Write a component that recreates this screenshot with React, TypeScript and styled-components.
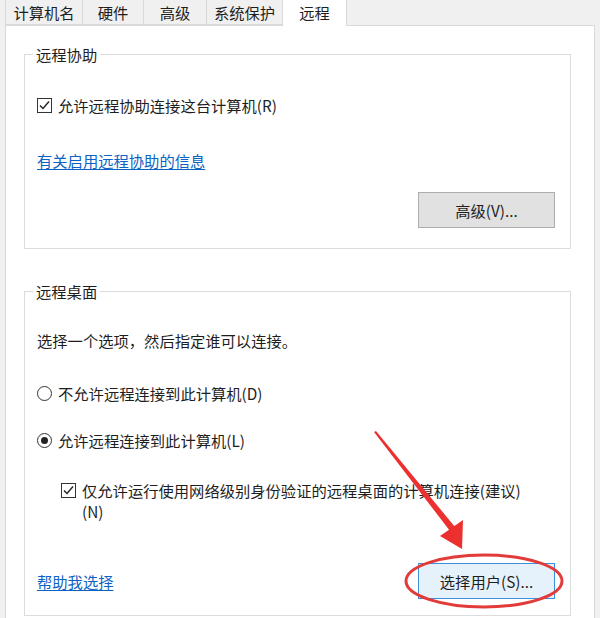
import React from "react";
import styled, { createGlobalStyle } from "styled-components";

const Global = createGlobalStyle`
  html, body { margin: 0; padding: 0; background: #f0f0f0; }
  * { box-sizing: border-box; }
`;

const FONT = `"Microsoft YaHei", "Noto Sans CJK SC", "Noto Sans", sans-serif`;

const Root = styled.div`
  position: relative;
  width: 600px;
  height: 618px;
  overflow: hidden;
  background: #f0f0f0;
  font-family: ${FONT};
  font-size: 15.3px;
  color: #1e1e1e;
`;

const TabStrip = styled.div`
  position: relative;
  z-index: 1;
  display: flex;
  align-items: flex-end;
  height: 25px;
  padding-left: 5px;
`;

const Tab = styled.div<{ $active?: boolean; $w: number }>`
  width: ${(p) => p.$w}px;
  height: ${(p) => (p.$active ? "26px" : "25px")};
  margin-bottom: ${(p) => (p.$active ? "-1px" : "0")};
  margin-left: -1px;
  &:first-child { margin-left: 0; }
  display: flex;
  align-items: center;
  justify-content: center;
  padding-bottom: ${(p) => (p.$active ? "2px" : "0")};
  background: ${(p) => (p.$active ? "#ffffff" : "#f0f0f0")};
  border: 1px solid #d9d9d9;
  border-top: none;
  border-bottom: ${(p) => (p.$active ? "none" : "1px solid #d9d9d9")};
  line-height: 20px;
  white-space: nowrap;
`;

const Page = styled.div`
  margin: 0 5px 0 5px;
  height: 600px;
  background: #ffffff;
  border: 1px solid #d9d9d9;
  padding: 19px 23px 0 18px;
`;

const Group = styled.fieldset<{ $pb: number; $mt?: number }>`
  margin: ${(p) => p.$mt ?? 0}px 0 0 0;
  padding: 0 15px ${(p) => p.$pb}px 12px;
  min-width: 0;
  border: 1px solid #dcdcdc;
  display: flex;
  flex-direction: column;
`;

const Legend = styled.legend`
  margin-left: -4px;
  padding: 0 3px;
  font-size: 15.3px;
  line-height: 18px;
  color: #1e1e1e;
`;

const Row = styled.div<{ $mt: number; $indent?: number }>`
  display: flex;
  align-items: center;
  gap: 6px;
  height: 20px;
  line-height: 20px;
  margin-top: ${(p) => p.$mt}px;
  padding-left: ${(p) => p.$indent ?? 0}px;
  white-space: nowrap;
`;

const MultiRow = styled.div<{ $mt: number; $indent?: number }>`
  display: flex;
  align-items: flex-start;
  gap: 6px;
  line-height: 21px;
  margin-top: ${(p) => p.$mt}px;
  padding-left: ${(p) => p.$indent ?? 0}px;
`;

const Text = styled.p<{ $mt: number }>`
  margin: ${(p) => p.$mt}px 0 0 0;
  line-height: 20px;
  white-space: nowrap;
`;

const LinkText = styled.a<{ $mt?: number }>`
  display: block;
  margin-top: ${(p) => p.$mt ?? 0}px;
  line-height: 20px;
  color: #0b63c4;
  text-decoration: underline;
  text-underline-offset: 2px;
  cursor: pointer;
  white-space: nowrap;
`;

const BoxMark = styled.span<{ $top?: number }>`
  flex: none;
  width: 15px;
  height: 15px;
  margin-top: ${(p) => p.$top ?? 0}px;
  border: 1px solid #333;
  background: #fff;
  display: flex;
  align-items: center;
  justify-content: center;
`;

const RadioMark = styled.span`
  flex: none;
  width: 15px;
  height: 15px;
  border: 1px solid #333;
  border-radius: 50%;
  background: #fff;
  display: flex;
  align-items: center;
  justify-content: center;
`;

const RadioDot = styled.span`
  width: 7px;
  height: 7px;
  border-radius: 50%;
  background: #222;
`;

const ButtonRow = styled.div<{ $mt: number; $between?: boolean }>`
  display: flex;
  align-items: center;
  justify-content: ${(p) => (p.$between ? "space-between" : "flex-end")};
  margin-top: ${(p) => p.$mt}px;
`;

const Button = styled.button<{ $primary?: boolean }>`
  width: 137px;
  height: 36px;
  font-family: ${FONT};
  font-size: 15.3px;
  color: #1e1e1e;
  background: ${(p) => (p.$primary ? "#e5f1fb" : "#e1e1e1")};
  border: 1px solid ${(p) => (p.$primary ? "#3c8fd8" : "#adadad")};
  padding: 0;
`;

const Overlay = styled.svg`
  position: absolute;
  left: 0;
  top: 0;
  width: 600px;
  height: 618px;
  pointer-events: none;
`;

const Check = ({ top }: { top?: number }) => (
  <BoxMark $top={top}>
    <svg width="13" height="13" viewBox="0 0 13 13">
      <path d="M2 6.5 L5 9.5 L11 2.5" fill="none" stroke="#222" strokeWidth="1.4" />
    </svg>
  </BoxMark>
);

const Radio = ({ checked }: { checked?: boolean }) => (
  <RadioMark>{checked && <RadioDot />}</RadioMark>
);

export default function App() {
  return (
    <Root>
      <Global />
      <TabStrip>
        <Tab $w={78}>计算机名</Tab>
        <Tab $w={62}>硬件</Tab>
        <Tab $w={64}>高级</Tab>
        <Tab $w={77}>系统保护</Tab>
        <Tab $w={65} $active>远程</Tab>
      </TabStrip>
      <Page>
        <Group $pb={20}>
          <Legend>远程协助</Legend>
          <Row $mt={32}>
            <Check />
            <span>允许远程协助连接这台计算机(R)</span>
          </Row>
          <LinkText $mt={35}>有关启用远程协助的信息</LinkText>
          <ButtonRow $mt={22}>
            <Button>高级(V)...</Button>
          </ButtonRow>
        </Group>
        <Group $pb={16} $mt={33}>
          <Legend>远程桌面</Legend>
          <Text $mt={30}>选择一个选项，然后指定谁可以连接。</Text>
          <Row $mt={33}>
            <Radio />
            <span>不允许远程连接到此计算机(D)</span>
          </Row>
          <Row $mt={27}>
            <Radio checked />
            <span>允许远程连接到此计算机(L)</span>
          </Row>
          <MultiRow $mt={30} $indent={24}>
            <Check top={3} />
            <span>
              仅允许运行使用网络级别身份验证的远程桌面的计算机连接(建议)
              <br />
              (N)
            </span>
          </MultiRow>
          <ButtonRow $mt={41} $between>
            <LinkText>帮助我选择</LinkText>
            <Button $primary>选择用户(S)...</Button>
          </ButtonRow>
        </Group>
      </Page>
      <Overlay viewBox="0 0 600 618">
        <polygon points="374,432 376,431 455,527 450,531" fill="#ec2f2f" />
        <polygon points="462,549 440,536 463,520" fill="#ec2f2f" />
        <ellipse cx="484" cy="581" rx="78" ry="26" fill="none" stroke="#e33a3a" strokeWidth="3" />
      </Overlay>
    </Root>
  );
}
